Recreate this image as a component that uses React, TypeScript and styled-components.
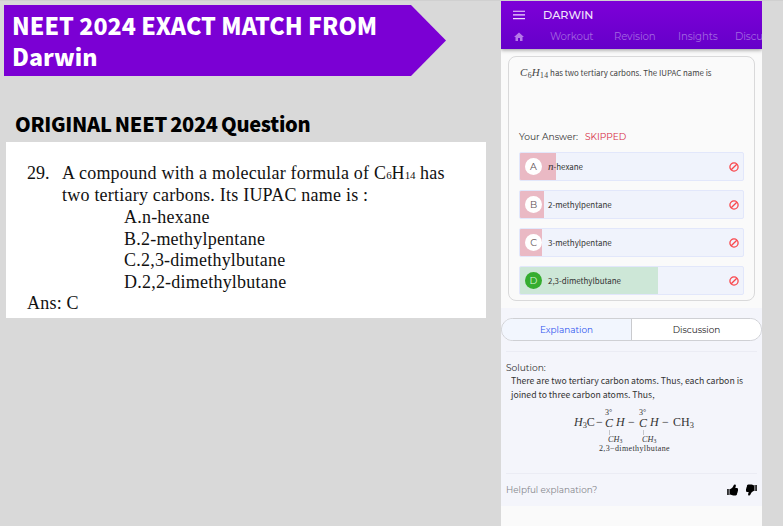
import React from "react";
import styled, { createGlobalStyle } from "styled-components";
import { MdHome } from "react-icons/md";

const source = `"Noto Sans CJK SC", "Open Sans", sans-serif`;
const round = `Montserrat, Lato, sans-serif`;
const times = `"Liberation Serif", serif`;

const GlobalStyle = createGlobalStyle`
  * { box-sizing: border-box; }
  body { margin: 0; background: #d9d9d9; overflow: hidden; }
`;

const Page = styled.div`
  display: flex;
  width: 783px;
  height: 526px;
  border-top: 1px solid #d0d0d0;
  background: #d9d9d9;
  overflow: hidden;
  white-space: nowrap;
`;

const Left = styled.section`
  width: 501px;
  flex: none;
  padding: 4px 0 0 4px;
`;

const Banner = styled.h1`
  margin: 0;
  width: 442px;
  height: 71px;
  padding: 5px 0 0 8px;
  background: #7b00d4;
  clip-path: polygon(0 0, 407px 0, 442px 35.5px, 407px 71px, 0 71px);
  color: #fff;
  font: 900 23.2px/30.5px ${source};
  letter-spacing: 0.03px;
`;

const Heading = styled.h2`
  margin: 32px 0 0 11px;
  height: 34px;
  color: #000;
  font: 900 20px/32px ${source};
  letter-spacing: -0.3px;
  word-spacing: -1px;
`;

const Sheet = styled.article`
  width: 480px;
  height: 176px;
  margin-left: 2px;
  padding: 21px 0 0 21px;
  background: #fff;
  color: #111;
  font: 18px/21.6px ${times};
`;

const Question = styled.div`
  display: grid;
  grid-template-columns: 35px 1fr;
  height: 44px;
`;

const Line = styled.div`
  letter-spacing: 0.22px;
`;

const Tiny = styled.span`
  font-size: 11px;
  line-height: 1;
  letter-spacing: -0.2px;
`;

const Choices = styled.div`
  padding-left: 97px;
`;

const Phone = styled.main`
  width: 261px;
  flex: none;
  display: flex;
  flex-direction: column;
  background: #fafafa;
  overflow: hidden;
`;

const Header = styled.header`
  height: 48px;
  flex: none;
  background: linear-gradient(#7d00d8, #6500c9);
  box-shadow: 0 1px 4px rgba(0, 0, 0, 0.4);
`;

const TitleBar = styled.div`
  display: flex;
  align-items: center;
  height: 27px;
  padding-left: 12px;
  gap: 18px;
  color: #f3e6fb;
  font: 500 11.2px/28px ${round};
`;

const Nav = styled.nav`
  display: grid;
  grid-template-columns: 37px 64px 64px 57px 27px;
  padding-left: 12px;
  height: 18px;
  color: #a366e1;
  font: 400 10.2px/17px ${round};
  letter-spacing: -0.15px;
`;

const NavItem = styled.span`
  overflow: hidden;
`;

const HomeIcon = styled(MdHome)`
  width: 12px;
  height: 12px;
  margin-top: 3px;
  color: #b67ae9;
`;

const Card = styled.section`
  width: 247px;
  height: 245px;
  flex: none;
  margin: 7px 0 0 7px;
  padding: 7px 10px 0 10px;
  border: 1px solid #d9d9da;
  border-radius: 8px;
`;

const Prompt = styled.div`
  height: 63px;
  padding-left: 1px;
  color: #444;
  font: 400 7.9px/18px ${source};
`;

const MathText = styled.span<{ $track?: number }>`
  font: italic 11px/1 ${times};
  letter-spacing: ${(p) => p.$track ?? 0}px;
`;

const Sub = styled.span`
  font-size: 0.7em;
  font-style: normal;
  line-height: 0;
  vertical-align: -0.25em;
`;

const AnswerLine = styled.div`
  display: flex;
  height: 25px;
  gap: 7px;
  color: #333;
  font: 400 9.1px/20px ${round};
`;

const Skipped = styled.span`
  color: #d62c44;
`;

const Options = styled.div`
  display: grid;
  gap: 9px;
`;

const Option = styled.div<{ $fill: number; $good?: boolean }>`
  display: flex;
  align-items: center;
  height: 29px;
  width: 225px;
  padding: 0 4px 0 5px;
  border: 1px solid #e2e7fb;
  border-radius: 2px;
  background: linear-gradient(
    90deg,
    ${(p) => (p.$good ? "#cde7d7" : "#eab9c4")} ${(p) => p.$fill}px,
    #f0f3fc ${(p) => p.$fill}px
  );
`;

const Letter = styled.span<{ $good?: boolean }>`
  width: 17px;
  height: 17px;
  border-radius: 50%;
  text-align: center;
  color: ${(p) => (p.$good ? "#d9f5d6" : "#5e5054")};
  background: ${(p) => (p.$good ? "#35ad2f" : "#fff")};
  font: 400 9.5px/18px ${round};
`;

const OptionText = styled.span`
  flex: 1;
  padding-left: 6px;
  color: #333;
  font: 400 7.95px/20px ${source};
`;

const Lower = styled.section`
  height: 198px;
  flex: none;
  margin-top: 7px;
  padding-top: 10px;
  background: #f4f5fb;
`;

const Tabs = styled.div`
  display: flex;
  height: 23px;
  border: 1px solid #cfd0d4;
  border-radius: 12px;
  overflow: hidden;
`;

const Tab = styled.div<{ $active?: boolean }>`
  flex: 1;
  text-align: center;
  color: ${(p) => (p.$active ? "#2f55f0" : "#222")};
  background: ${(p) => (p.$active ? "#f2f6fe" : "#fff")};
  border-right: ${(p) => (p.$active ? "1px solid #c9cace" : "0")};
  font: 400 8.9px/22px ${round};
`;

const Divider = styled.hr`
  margin: 10px 5px 0;
  border: 0;
  border-top: 1px solid #ebecf4;
`;

const Solution = styled.div`
  height: 111px;
  padding: 8px 0 0 5px;
  color: #333;
  font: 400 9.1px/15px ${round};
`;

const Explain = styled.p`
  margin: -1px 0 0 5px;
  color: #333;
  font: 400 8.7px/13.5px ${source};
`;

const Formula = styled.div`
  display: grid;
  grid-template-columns: 22px 9px 11px 12px 11px 11px 12px 11px 22px;
  margin: 8px 0 0 68px;
  color: #333;
  font: 12px/14px ${times};
`;

const Atom = styled.div<{ $italic?: boolean }>`
  padding-top: 6px;
  font-style: ${(p) => (p.$italic ? "italic" : "normal")};
`;

const Carbon = styled.div`
  display: flex;
  flex-direction: column;
  font-style: italic;
`;

const Degree = styled.span`
  height: 8px;
  font: 8px/8px ${times};
`;

const Center = styled.span`
  height: 12px;
  line-height: 12px;
`;

const Bond = styled.span`
  width: 1px;
  height: 5px;
  margin: 1px 0 0 4px;
  background: #c4c5ca;
`;

const Branch = styled.span`
  width: 16px;
  margin-left: 3px;
  height: 9px;
  font: italic 8.2px/9px ${times};
`;

const Caption = styled.div`
  margin-left: 93px;
  color: #333;
  font: 8px/9px ${times};
  letter-spacing: 0.37px;
`;

const Feedback = styled.footer`
  display: flex;
  justify-content: space-between;
  padding: 6px 5px 0;
  color: #85868b;
  font: 400 8.85px/20px ${round};
`;

const Thumbs = styled.div`
  display: flex;
  gap: 8px;
  padding-top: 4px;
`;

const ThumbSvg = styled.svg<{ $down?: boolean }>`
  width: 11px;
  height: 12px;
  transform: rotate(${(p) => (p.$down ? 180 : 0)}deg);
`;

const choices = [
  { key: "A", fill: 36, text: "hexane" },
  { key: "B", fill: 24, text: "2-methylpentane" },
  { key: "C", fill: 22, text: "3-methylpentane" },
  { key: "D", fill: 138, text: "2,3-dimethylbutane", good: true },
];

const MenuIcon = () => (
  <svg width="12" height="10" viewBox="0 0 12 10" stroke="#f0dcfb" strokeWidth="1.1">
    <path d="M0 1.2h12M0 4.9h12M0 8.6h12" />
  </svg>
);

const BanIcon = () => (
  <svg width="10" height="10" viewBox="0 0 10 10" fill="none" stroke="#f9464b" strokeWidth="1.3">
    <circle cx="5" cy="5" r="4.1" />
    <path d="M2.2 7.8 7.8 2.2" />
  </svg>
);

const Thumb = ({ down }: { down?: boolean }) => (
  <ThumbSvg $down={down} viewBox="0 0 11 12" fill="#000">
    <path d="M0 5h.8v6H0zM1.3 5h1.2v6H1.3zM3 5.200C4.800 4.400 6 3.200 6.700 1.200 7 .1 8.900.1 8.900 1.600c0 1-.4 1.700-.6 2.500h1.500c1.400 0 1.600 1.300 1 1.900.5.500.3 1.200-.2 1.600.3.600 0 1.200-.5 1.500.2 1-.3 2.300-1.500 2.300H6.300C5 11.400 4.200 10.800 3 10.600z" />
  </ThumbSvg>
);

const CarbonCenter = () => (
  <Carbon>
    <Degree>3°</Degree>
    <Center>C</Center>
    <Bond />
    <Branch>CH<Sub>3</Sub></Branch>
  </Carbon>
);

export default function App() {
  return (
    <>
      <GlobalStyle />
      <Page>
        <Left>
          <Banner>NEET 2024 EXACT MATCH FROM<br />Darwin</Banner>
          <Heading>ORIGINAL NEET 2024 Question</Heading>
          <Sheet>
            <Question>
              <span>29.</span>
              <div>
                <Line>A compound with a molecular formula of C<Tiny>6</Tiny>H<Tiny>14</Tiny> has</Line>
                <Line>two tertiary carbons. Its IUPAC name is :</Line>
              </div>
            </Question>
            <Choices>
              <Line>A.n-hexane</Line>
              <Line>B.2-methylpentane</Line>
              <Line>C.2,3-dimethylbutane</Line>
              <Line>D.2,2-dimethylbutane</Line>
            </Choices>
            <Line>Ans: C</Line>
          </Sheet>
        </Left>
        <Phone>
          <Header>
            <TitleBar><MenuIcon /><span>DARWIN</span></TitleBar>
            <Nav>
              <HomeIcon />
              <span>Workout</span>
              <span>Revision</span>
              <span>Insights</span>
              <NavItem>Discu</NavItem>
            </Nav>
          </Header>
          <Card>
            <Prompt>
              <MathText $track={0.3}>C<Sub>6</Sub>H<Sub>14</Sub></MathText> has two tertiary carbons. The IUPAC name is
            </Prompt>
            <AnswerLine>
              <span>Your Answer:</span>
              <Skipped>SKIPPED</Skipped>
            </AnswerLine>
            <Options>
              {choices.map((c) => (
                <Option key={c.key} $fill={c.fill} $good={c.good}>
                  <Letter $good={c.good}>{c.key}</Letter>
                  <OptionText>
                    {c.key === "A" && <><MathText>n</MathText>-</>}
                    {c.text}
                  </OptionText>
                  <BanIcon />
                </Option>
              ))}
            </Options>
          </Card>
          <Lower>
            <Tabs>
              <Tab $active>Explanation</Tab>
              <Tab>Discussion</Tab>
            </Tabs>
            <Divider />
            <Solution>
              <span>Solution:</span>
              <Explain>
                There are two tertiary carbon atoms. Thus, each carbon is<br />
                joined to three carbon atoms. Thus,
              </Explain>
              <Formula>
                <Atom><i>H</i><Sub>3</Sub>C</Atom>
                <Atom>−</Atom>
                <CarbonCenter />
                <Atom $italic>H</Atom>
                <Atom>−</Atom>
                <CarbonCenter />
                <Atom $italic>H</Atom>
                <Atom>−</Atom>
                <Atom>CH<Sub>3</Sub></Atom>
              </Formula>
              <Caption>2,3−dimethylbutane</Caption>
            </Solution>
            <Divider />
            <Feedback>
              <span>Helpful explanation?</span>
              <Thumbs><Thumb /><Thumb down /></Thumbs>
            </Feedback>
          </Lower>
        </Phone>
      </Page>
    </>
  );
}
